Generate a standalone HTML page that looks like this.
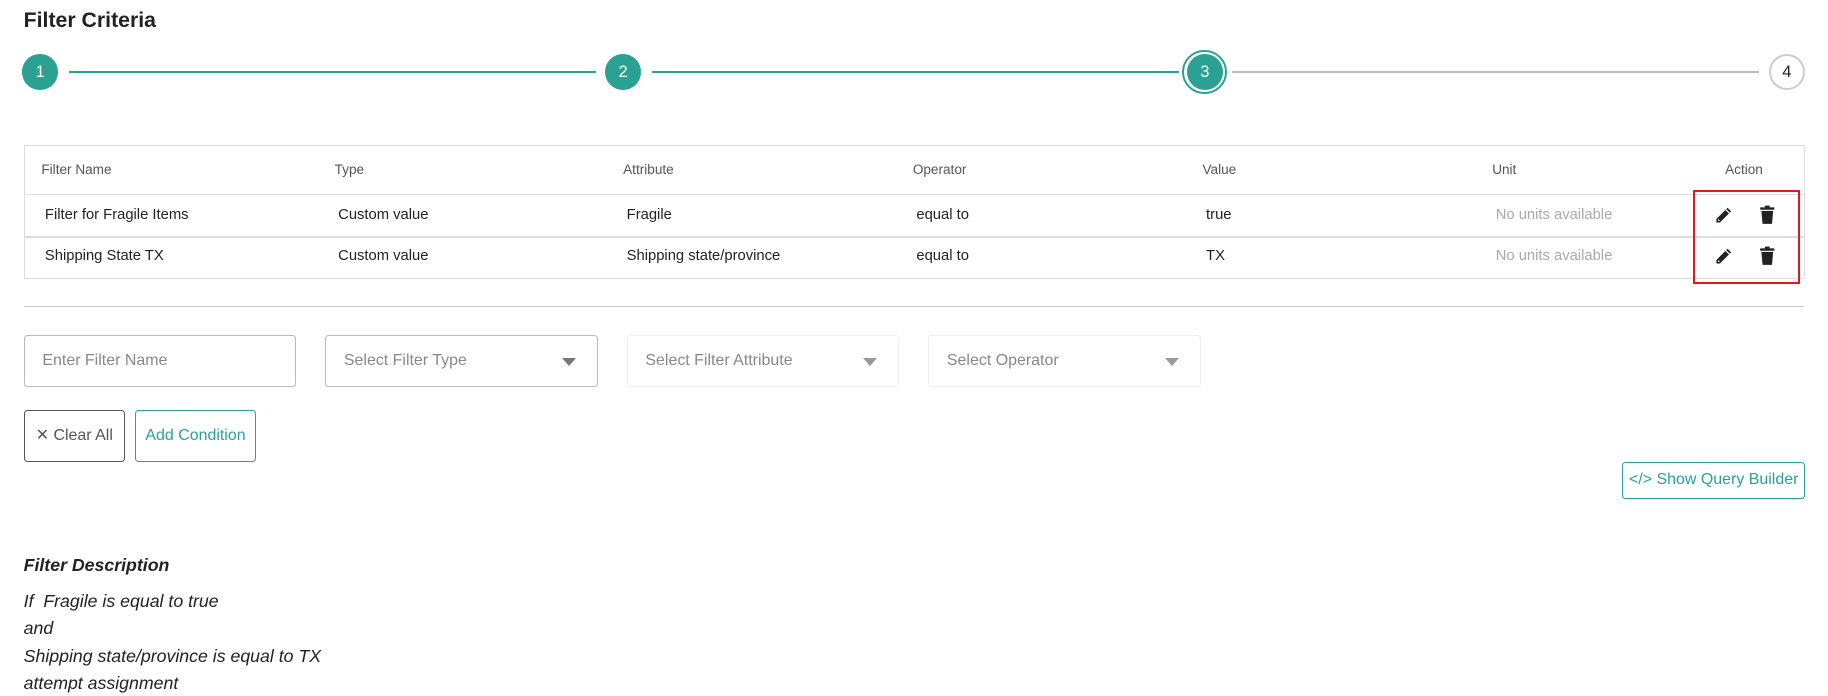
<!DOCTYPE html>
<html><head><meta charset="utf-8"><style>
html,body{margin:0;padding:0;background:#fff;}
body{width:1546px;height:589px;zoom:1.18241;position:relative;overflow:hidden;font-family:"Liberation Sans",sans-serif;color:#222;}
.a{position:absolute;}
.c{position:absolute;border-radius:50%;width:30px;height:30px;background:#2ba193;color:#fff;font-size:14px;text-align:center;line-height:30px;}
.ln{position:absolute;height:2px;top:60px;background:#2ba193;}
.th{position:absolute;top:137px;font-size:11.5px;color:#555;}
.td{position:absolute;font-size:12.5px;color:#222;}
.inp{position:absolute;top:283px;height:43px;width:229px;border:1px solid #bbb;border-radius:3px;font-size:13.5px;color:#888;}
.inp span{position:absolute;left:15px;top:14px;}
.inp i{position:absolute;right:18px;top:19px;width:0;height:0;border-left:6px solid transparent;border-right:6px solid transparent;border-top:7px solid #777;}
.d{position:absolute;left:20px;font-size:15px;font-style:italic;color:#222;}
</style></head><body>
<div class="a" style="left:20px;top:7px;font-size:18px;font-weight:bold;color:#222;">Filter Criteria</div>
<div class="ln" style="left:58px;width:446px;"></div>
<div class="ln" style="left:551px;width:446px;"></div>
<div class="ln" style="left:1042px;width:446px;background:#bbb;"></div>
<div class="c" style="left:19px;top:46px;">1</div>
<div class="c" style="left:512px;top:46px;">2</div>
<div class="a" style="left:1000px;top:42px;width:34px;height:34px;border:2px solid #2ba193;border-radius:50%;"></div>
<div class="c" style="left:1004px;top:46px;width:30px;height:30px;">3</div>
<div class="c" style="left:1496px;top:46px;width:27px;height:27px;line-height:27px;background:#fff;color:#222;border:2px solid #ccc;">4</div>

<div class="a" style="left:20px;top:123px;width:1505px;height:111px;border:1px solid #ddd;"></div>
<div class="a" style="left:21px;top:164px;width:1505px;height:1px;background:#ddd;"></div>
<div class="a" style="left:21px;top:200px;width:1505px;height:1px;background:#ddd;"></div>
<div class="th" style="left:35px">Filter Name</div>
<div class="th" style="left:283px">Type</div>
<div class="th" style="left:527px">Attribute</div>
<div class="th" style="left:772px">Operator</div>
<div class="th" style="left:1017px">Value</div>
<div class="th" style="left:1262px">Unit</div>
<div class="th" style="left:1459px">Action</div>
<div class="td" style="left:38px;top:175px">Filter for Fragile Items</div>
<div class="td" style="left:286px;top:175px">Custom value</div>
<div class="td" style="left:530px;top:175px">Fragile</div>
<div class="td" style="left:775px;top:175px">equal to</div>
<div class="td" style="left:1020px;top:175px">true</div>
<div class="td" style="left:1265px;top:175px;color:#aaa">No units available</div>
<div class="td" style="left:38px;top:210px">Shipping State TX</div>
<div class="td" style="left:286px;top:210px">Custom value</div>
<div class="td" style="left:530px;top:210px">Shipping state/province</div>
<div class="td" style="left:775px;top:210px">equal to</div>
<div class="td" style="left:1020px;top:210px">TX</div>
<div class="td" style="left:1265px;top:210px;color:#aaa">No units available</div>
<div class="a" style="left:1432px;top:161px;width:87px;height:76px;border:2.5px solid #e0181f;"></div>
<svg class="a" style="left:1450px;top:174px" width="16" height="16" viewBox="0 0 16 16"><path d="M11.5 1.5l3 3L5 14H2v-3z" fill="#222"/><path d="M10 3l3 3" stroke="#fff" stroke-width="1"/><path d="M3.5 11.5l1 1" stroke="#fff" stroke-width="1"/></svg>
<svg class="a" style="left:1488px;top:173px" width="14" height="17" viewBox="0 0 14 17"><rect x="1" y="2" width="12" height="2" fill="#222"/><rect x="5" y="0.5" width="4" height="2" fill="#222"/><path d="M2 5h10l-1 11H3z" fill="#222"/></svg>
<svg class="a" style="left:1450px;top:209px" width="16" height="16" viewBox="0 0 16 16"><path d="M11.5 1.5l3 3L5 14H2v-3z" fill="#222"/><path d="M10 3l3 3" stroke="#fff" stroke-width="1"/><path d="M3.5 11.5l1 1" stroke="#fff" stroke-width="1"/></svg>
<svg class="a" style="left:1488px;top:208px" width="14" height="17" viewBox="0 0 14 17"><rect x="1" y="2" width="12" height="2" fill="#222"/><rect x="5" y="0.5" width="4" height="2" fill="#222"/><path d="M2 5h10l-1 11H3z" fill="#222"/></svg>

<div class="a" style="left:20px;top:259px;width:1506px;height:1px;background:#ccc;"></div>
<div class="inp" style="left:20px"><span>Enter Filter Name</span></div>
<div class="inp" style="left:275px"><span>Select Filter Type</span><i></i></div>
<div class="inp" style="left:530px;border-color:#eee"><span>Select Filter Attribute</span><i style="border-top-color:#999"></i></div>
<div class="inp" style="left:785px;border-color:#eee"><span>Select Operator</span><i style="border-top-color:#999"></i></div>
<div class="a" style="left:20px;top:347px;width:84px;height:42px;border:1px solid #555;border-radius:3px;font-size:13.5px;color:#555;line-height:42px;text-align:center;">✕ Clear All</div>
<div class="a" style="left:114px;top:347px;width:101px;height:42px;border:1px solid #2ba193;border-radius:3px;font-size:13.5px;color:#2ba193;line-height:42px;text-align:center;">Add Condition</div>
<div class="a" style="left:1372px;top:391px;width:153px;height:29px;border:1px solid #2ba193;border-radius:3px;font-size:13.5px;color:#2ba193;line-height:29px;text-align:center;">&lt;/&gt; Show Query Builder</div>

<div class="d" style="top:469px;font-weight:bold;">Filter Description</div>
<div class="d" style="top:500px;">If &nbsp;Fragile is equal to true</div>
<div class="d" style="top:523px;">and</div>
<div class="d" style="top:546px;">Shipping state/province is equal to TX</div>
<div class="d" style="top:569px;">attempt assignment</div>
</body></html>
